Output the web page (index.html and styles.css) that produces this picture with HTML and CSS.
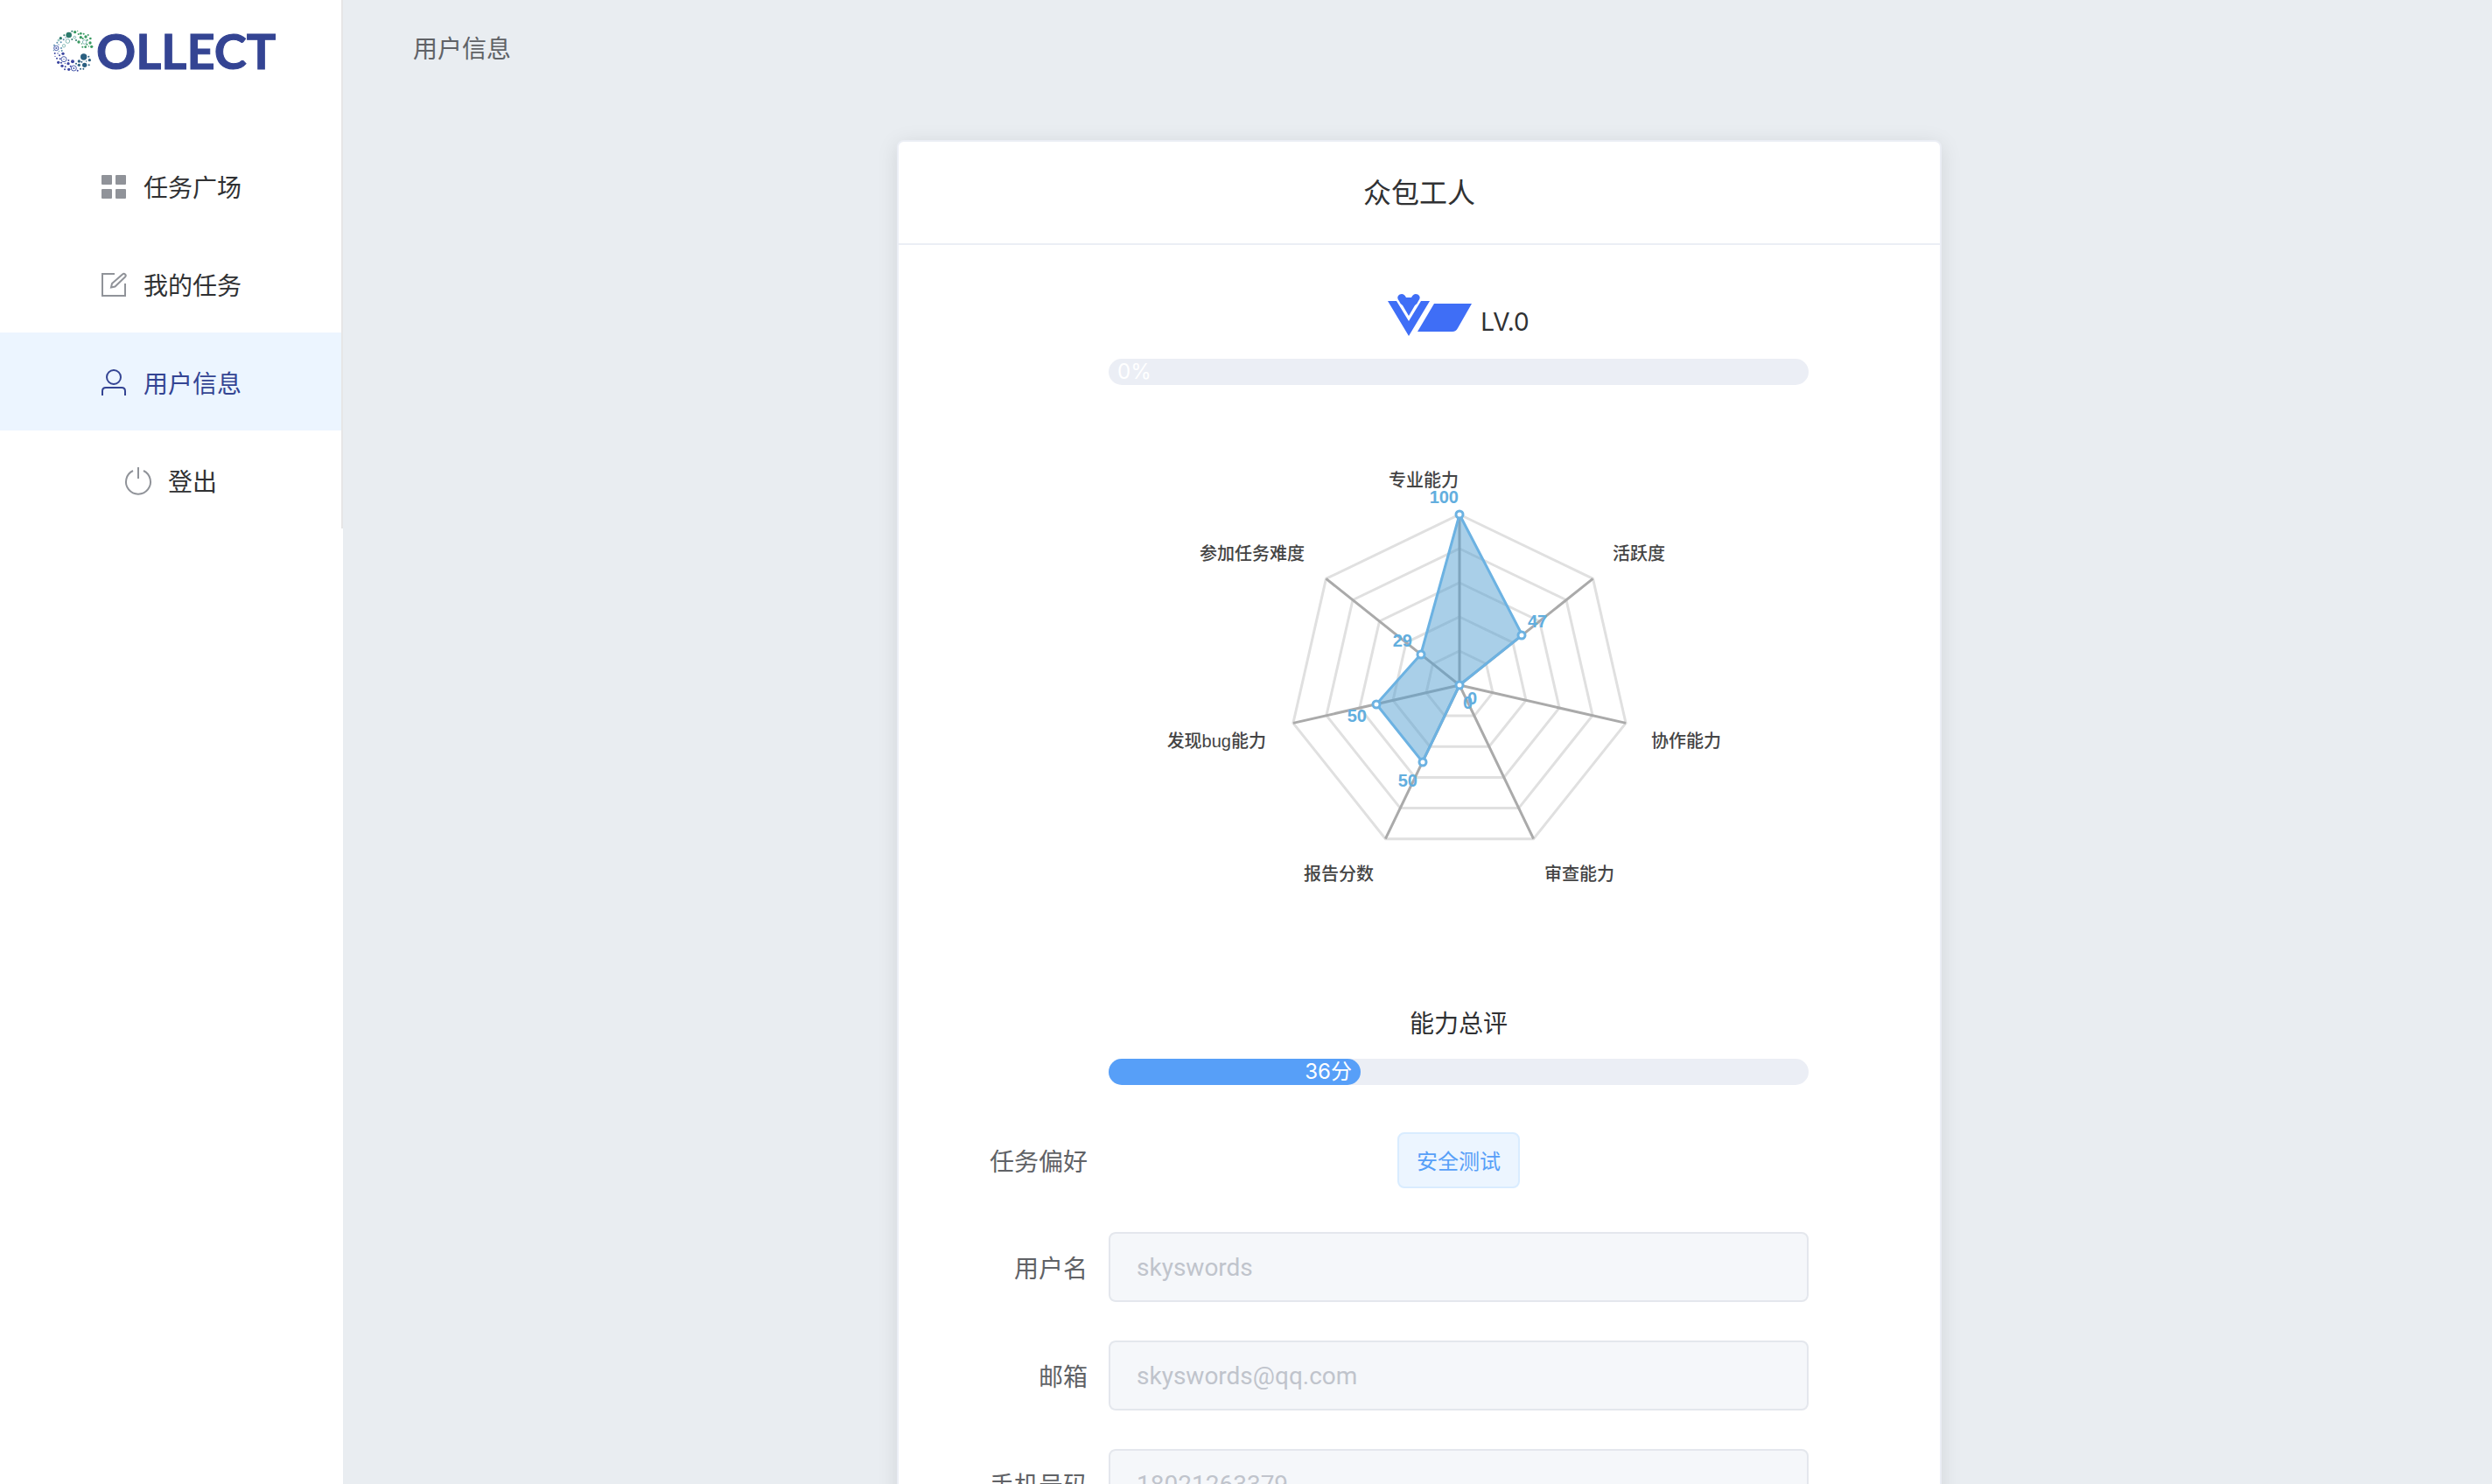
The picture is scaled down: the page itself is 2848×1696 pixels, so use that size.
FILE: index.html
```
<!DOCTYPE html>
<html lang="zh-CN">
<head>
<meta charset="utf-8">
<title>用户信息</title>
<link rel="stylesheet" href="styles.css">
</head>
<body>
<div class="app">
  <aside class="sidebar">
    <nav class="menu">
      <a class="logo" href="#" aria-label="COLLECT">
        <svg class="logo-mark" viewBox="12 15 150 150" aria-hidden="true">
          <g fill="#2c7a6c"><circle cx="68" cy="36" r="10"/><circle cx="40" cy="47" r="5"/><circle cx="79" cy="23" r="3"/><circle cx="52" cy="37" r="3"/><circle cx="93" cy="54" r="3"/><circle cx="79" cy="51" r="3"/></g>
          <g fill="#3a9a62"><circle cx="89" cy="26" r="5"/><circle cx="98" cy="22" r="2"/><circle cx="109" cy="31" r="4"/><circle cx="101" cy="33" r="3"/><circle cx="119" cy="32" r="3"/><circle cx="126" cy="42" r="5"/><circle cx="109" cy="44" r="5"/><circle cx="102" cy="60" r="5"/><circle cx="116" cy="48" r="3"/><circle cx="134" cy="36" r="3"/><circle cx="142" cy="48" r="4"/><circle cx="131" cy="53" r="3"/><circle cx="141" cy="63" r="5"/><circle cx="146" cy="76" r="5"/><circle cx="130" cy="68" r="3"/><circle cx="125" cy="77" r="4"/><circle cx="115" cy="77" r="3"/><circle cx="136" cy="75" r="2"/><circle cx="112" cy="66" r="2"/></g>
          <g fill="#2a5f80"><circle cx="119" cy="111" r="11"/><circle cx="122" cy="139" r="8"/><circle cx="139" cy="122" r="5"/><circle cx="103" cy="126" r="5"/><circle cx="103" cy="139" r="5"/><circle cx="112" cy="128" r="3"/><circle cx="137" cy="139" r="3"/><circle cx="136" cy="110" r="3"/><circle cx="128" cy="126" r="2"/><circle cx="108" cy="152" r="3"/><circle cx="118" cy="152" r="3"/><circle cx="93" cy="134" r="3"/></g>
          <g fill="#3c46a0"><circle cx="48" cy="100" r="5"/><circle cx="32" cy="130" r="5"/><circle cx="45" cy="142" r="5"/><circle cx="66" cy="134" r="5"/><circle cx="81" cy="127" r="6"/><circle cx="68" cy="154" r="5"/><circle cx="20" cy="99" r="3"/><circle cx="27" cy="116" r="3"/><circle cx="38" cy="118" r="3"/><circle cx="56" cy="145" r="3"/><circle cx="54" cy="154" r="3"/><circle cx="67" cy="123" r="3"/><circle cx="36" cy="106" r="3"/><circle cx="42" cy="131" r="3"/><circle cx="98" cy="158" r="3"/><circle cx="74" cy="143" r="3"/><circle cx="30" cy="99" r="2"/><circle cx="21" cy="109" r="2"/><circle cx="55" cy="133" r="2"/></g>
          <g fill="#5a8fae"><circle cx="28" cy="62" r="3"/><circle cx="18" cy="71" r="3"/><circle cx="41" cy="61" r="3"/><circle cx="50" cy="52" r="3"/><circle cx="33" cy="69" r="2"/><circle cx="42" cy="81" r="3"/><circle cx="44" cy="90" r="3"/><circle cx="57" cy="45" r="2"/><circle cx="34" cy="92" r="2"/><circle cx="16" cy="89" r="2"/></g>
          <g fill="none" stroke="#4c5fae" stroke-width="3"><circle cx="51" cy="119" r="9"/><circle cx="85" cy="150" r="9"/><circle cx="25" cy="81" r="8"/></g>
          <g fill="none" stroke="#4f9a94" stroke-width="2"><circle cx="64" cy="57" r="7"/><circle cx="122" cy="60" r="7"/><circle cx="88" cy="44" r="4"/><circle cx="51" cy="73" r="5"/><circle cx="33" cy="54" r="3"/></g>
          <g fill="#4c5fae"><circle cx="51" cy="119" r="2"/><circle cx="85" cy="150" r="3"/><circle cx="25" cy="81" r="3"/></g>
        </svg>
        <span class="logo-text">OLLECT</span>
      </a>
      <a class="menu-item" href="#">
        <svg class="icon" viewBox="0 0 36 36" fill="currentColor"><rect x="4" y="5" width="12" height="11" rx="1"/><rect x="20" y="5" width="12" height="11" rx="1"/><rect x="4" y="21" width="12" height="11" rx="1"/><rect x="20" y="21" width="12" height="11" rx="1"/></svg>
        <span>任务广场</span>
      </a>
      <a class="menu-item" href="#">
        <svg class="icon" viewBox="0 0 36 36" fill="none" stroke="currentColor" stroke-width="2"><path d="M19 6H5v25h26V17"/><path d="M28 6.500a2 2 0 0 1 3 3L19.500 20.500l-4.500 1 1-4.500Z"/></svg>
        <span>我的任务</span>
      </a>
      <a class="menu-item active" href="#" aria-current="page">
        <svg class="icon" viewBox="0 0 36 36" fill="none" stroke="currentColor" stroke-width="2"><circle cx="18" cy="12" r="8"/><path d="M5 33v-5q0-4 4-4h18q4 0 4 4v5"/></svg>
        <span>用户信息</span>
      </a>
      <a class="menu-item" href="#">
        <svg class="icon" viewBox="0 0 36 36" fill="none" stroke="currentColor" stroke-width="2"><path d="M18 3v13"/><path d="M12 7a14 14 0 1 0 12 0"/></svg>
        <span>登出</span>
      </a>
    </nav>
  </aside>
  <main class="main">
    <header class="page-head">用户信息</header>
    <section class="card">
      <h1 class="card-head">众包工人</h1>
      <form class="card-body">
        <div class="level">
          <svg class="level-mark" viewBox="0 0 98 50" fill="#3f6ef6" aria-hidden="true"><path d="M0 8h10l14 23L38 8h10L24 48Z"/><path d="M13 8C9 3 13 0 16 0q3 0 5 4h6q2-4 5-4c3 0 7 3 3 8q-1 3-4 5L24 25 17 13q-3-2-4-5Z"/><path d="M53 11h43L80 39q-2 4-6 4H34Z"/></svg>
          <span>LV.0</span>
        </div>
        <div class="progress"><div class="progress-fill empty" style="width:0%"><span>0%</span></div></div>
        <svg class="radar" viewBox="0 0 800 600" role="img" aria-label="能力雷达图">
          <g transform="translate(401 299)">
            <g class="rings">
              <polygon points="0,-195 152.500,-121.600 190.100,43.400 84.600,175.700 -84.600,175.700 -190.100,43.400 -152.500,-121.600"/>
              <polygon points="0,-156 122,-97.300 152.100,34.700 67.700,140.600 -67.700,140.600 -152.100,34.700 -122,-97.300"/>
              <polygon points="0,-117 91.500,-73 114.100,26 50.800,105.400 -50.800,105.400 -114.100,26 -91.500,-73"/>
              <polygon points="0,-78 61,-48.600 76,17.400 33.800,70.300 -33.800,70.300 -76,17.400 -61,-48.600"/>
              <polygon points="0,-39 30.500,-24.300 38,8.700 16.900,35.100 -16.900,35.100 -38,8.700 -30.500,-24.300"/>
            </g>
            <path class="axes" d="M0 0V-195M0 0L152.500-121.600M0 0L190.100 43.400M0 0L84.600 175.700M0 0L-84.600 175.700M0 0L-190.100 43.400M0 0L-152.500-121.600"/>
            <polygon class="area" points="0,-195 71.700,-57.200 0,0 -42.300,87.800 -95,21.700 -44.200,-35.300"/>
            <g class="dots"><circle cy="-195" r="4"/><circle cx="71" cy="-57" r="4"/><circle r="4"/><circle cx="-42" cy="88" r="4"/><circle cx="-95" cy="22" r="4"/><circle cx="-44" cy="-35" r="4"/></g>
          </g>
          <g class="names">
            <text class="end" x="400" y="72">专业能力</text><text x="576" y="156">活跃度</text><text x="620" y="370">协作能力</text><text x="498" y="522">审查能力</text>
            <text class="end" x="303" y="522">报告分数</text><text class="end" x="180" y="370">发现bug能力</text><text class="end" x="224" y="156">参加任务难度</text>
          </g>
          <g class="values">
            <text class="end" x="400" y="91">100</text><text x="479" y="233">47</text><text x="410" y="321">0</text><text x="405" y="326">0</text>
            <text class="end" x="353" y="415">50</text><text class="end" x="295" y="341">50</text><text class="end" x="347" y="255">29</text>
          </g>
        </svg>
        <h2 class="score-title">能力总评</h2>
        <div class="progress"><div class="progress-fill" style="width:36%"><span>36分</span></div></div>
        <div class="row preference"><span class="label">任务偏好</span><span class="tag">安全测试</span></div>
        <div class="row"><label class="label" for="name">用户名</label><input id="name" type="text" placeholder="skyswords" disabled></div>
        <div class="row"><label class="label" for="mail">邮箱</label><input id="mail" type="email" placeholder="skyswords@qq.com" disabled></div>
        <div class="row"><label class="label" for="phone">手机号码</label><input id="phone" type="tel" placeholder="18021263379" disabled></div>
      </form>
    </section>
  </main>
</div>
</body>
</html>
```
FILE: styles.css
```
* { box-sizing: border-box; }
body {
  margin: 0;
  background: #e9edf1;
  color: #303133;
  font: 28px/40px "Noto Sans CJK SC", sans-serif;
}
.app { display: flex; height: 100vh; overflow: hidden; }

.sidebar { flex: 0 0 392px; background: #fff; }
.menu { border-right: 2px solid #e6e6e6; }
.logo { display: flex; align-items: center; height: 156px; padding: 0 0 40px 60px; color: #344493; text-decoration: none; }
.logo-mark { width: 50px; height: 50px; }
.logo-text { font: 700 56px/60px Lato, sans-serif; -webkit-text-stroke: 1px #344493; }
.menu-item { display: flex; align-items: center; justify-content: center; gap: 16px; height: 112px; padding: 2px 2px 0 0; color: #303133; text-decoration: none; }
.icon { width: 36px; height: 36px; color: #909399; }
.menu-item.active { background: #ecf5ff; color: #344493; }
.active .icon { color: inherit; }

.main { flex: 1; padding: 34px 32px 0 36px; }
.page-head { height: 126px; padding-left: 44px; color: #606266; }
.card {
  width: 50%;
  margin: 0 auto;
  border: 2px solid #ebeef5;
  border-radius: 8px;
  background: #fff;
  box-shadow: 0 4px 24px rgba(0, 0, 0, .1);
}
.card-head { margin: 0; padding: 36px 0 40px; border-bottom: 2px solid #ebeef5; font-size: 32px; font-weight: 400; text-align: center; }
.card-body { display: flex; flex-direction: column; padding: 50px 150px 40px 240px; }
.level { display: flex; justify-content: center; gap: 8px; height: 80px; font-family: Inter, sans-serif; line-height: 76px; }
.level-mark { width: 98px; height: 50px; margin-top: 6px; }
.progress { height: 30px; border-radius: 15px; background: #ebeef5; }
.progress-fill { display: flex; justify-content: flex-end; height: 30px; border-radius: 15px; background: #579ff8; color: #fff; font: 24px/30px Inter, "Noto Sans CJK SC", sans-serif; }
.progress-fill.empty { justify-content: flex-start; }
.progress-fill span { margin: 0 10px; }

.radar { display: block; width: 100%; height: 600px; margin: 44px 0 64px; font: 20px "Liberation Sans", "Noto Sans CJK SC", sans-serif; }
.rings { fill: none; stroke: #e0e0e0; stroke-width: 3; }
.axes { fill: none; stroke: #aaa; stroke-width: 3; }
.area { fill: rgba(83, 159, 209, .5); stroke: #6cb2e2; stroke-width: 3; }
.dots { fill: #fff; stroke: #6cb2e2; stroke-width: 3; }
.names { fill: #444; font-weight: 500; }
.values { fill: #62aede; font-weight: 700; }
.end { text-anchor: end; }

.score-title { margin: 0 0 22px; font-size: 28px; font-weight: 400; text-align: center; }
.row { display: grid; grid-template-columns: 200px 1fr; align-items: center; margin: 0 0 44px -200px; }
.label { padding-right: 24px; color: #606266; text-align: right; }
.preference { height: 80px; margin: 46px 0 42px -200px; }
.tag { justify-self: center; padding: 0 20px; border: 2px solid #d9ecff; border-radius: 8px; background: #ecf5ff; color: #579ff8; font-size: 24px; line-height: 60px; }
input { width: 100%; height: 80px; padding: 0 30px; border: 2px solid #e4e7ed; border-radius: 8px; background: #f5f7fa; font: 28px Roboto, "Noto Sans CJK SC", sans-serif; }
input::placeholder { color: #c0c4cc; opacity: 1; }
```
